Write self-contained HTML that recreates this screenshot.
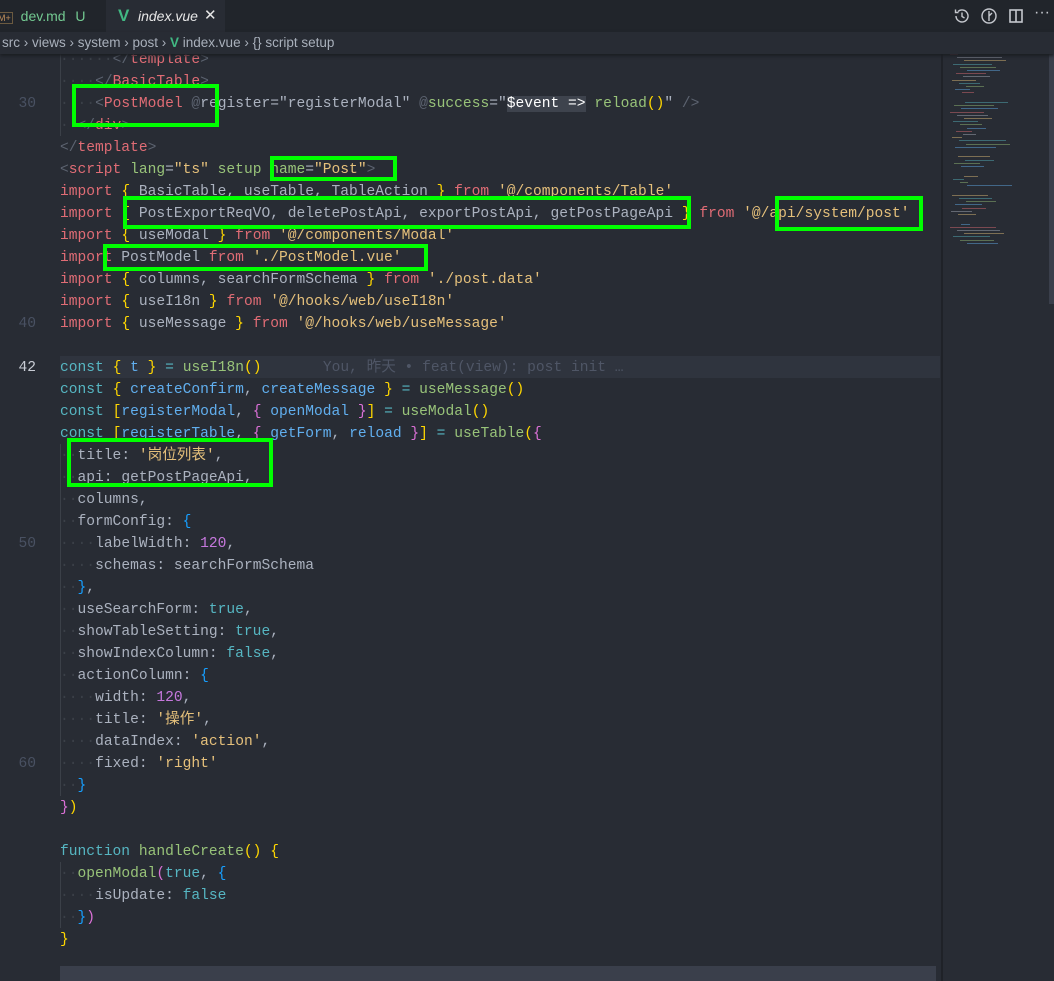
<!DOCTYPE html>
<html><head><meta charset="utf-8"><style>
body{margin:0;width:1054px;height:981px;background:#282c34;overflow:hidden;position:relative;font-family:"Liberation Sans","Noto Sans CJK SC",sans-serif}
.tabs{position:absolute;left:0;top:0;width:1054px;height:32px;background:#21252b}
.tab{position:absolute;top:0;height:32px;line-height:32px;font-size:14px}
.bc{position:absolute;left:0;top:32px;width:1054px;height:22px;background:#282c34;color:#a9b0bb;font-size:13.5px;line-height:22px;box-shadow:0 2px 3px #1b1e23;z-index:5}
.l{position:absolute;left:60px;height:22px;line-height:22px;font-family:"Liberation Mono","Noto Sans CJK SC",monospace;font-size:14.6px;white-space:pre;color:#abb2bf}
.n{position:absolute;left:0;width:36px;text-align:right;height:22px;line-height:22px;font-family:"Liberation Mono",monospace;font-size:14.6px;color:#495162}
.k{color:#e06c75}.c{color:#56b6c2}.s{color:#e5c07b}.f{color:#98c379}.b{color:#61afef}.p{color:#c678dd}.y{color:#ffd700}.m{color:#da70d6}.u{color:#179fff}.d{color:#3b4048}.g{color:#5c6370}
.box{position:absolute;border:4px solid #00ff00;box-sizing:border-box;z-index:6}
.mini{position:absolute;left:950px;top:54px;width:95px;height:927px}
.mini div{position:absolute;height:1px}
</style></head><body>
<div class="tabs">
 <div class="tab" style="left:0;width:105px;color:#73c991"><span style="color:#c18f5b;font-size:9px;border:1px solid #6b5a40;padding:0 1px;margin-left:-4px">M+</span> <span style="margin-left:4px">dev.md</span> <span style="margin-left:6px">U</span> <span style="color:#9da5b4;margin-left:8px">●</span></div>
 <div class="tab" style="left:106px;width:119px;background:#282c34;color:#e6e6e6"><span style="position:absolute;left:12px;color:#41b883;font-weight:bold;font-size:17px">V</span><i style="position:absolute;left:32px">index.vue</i><span style="position:absolute;left:98px;font-size:15px">✕</span></div>
 <svg style="position:absolute;left:953px;top:7px" width="18" height="18" viewBox="0 0 18 18" fill="none" stroke="#c5c8ce" stroke-width="1.4"><path d="M3 9a6 6 0 1 0 2-4.5"/><path d="M2.5 2.5v3h3"/><path d="M9 5.5v4l2.5 1.5"/></svg>
 <svg style="position:absolute;left:980px;top:7px" width="18" height="18" viewBox="0 0 18 18" fill="none" stroke="#c5c8ce" stroke-width="1.4"><circle cx="9" cy="9" r="7"/><path d="M9 4v10M9 9l3-3"/></svg>
 <svg style="position:absolute;left:1007px;top:7px" width="18" height="18" viewBox="0 0 18 18" fill="none" stroke="#c5c8ce" stroke-width="1.6"><rect x="3" y="3" width="12" height="12"/><path d="M9 3v12"/></svg>
 <span style="position:absolute;left:1034px;top:4px;color:#c5c8ce;font-size:16px">···</span>
</div>
<div class="bc"><span style="margin-left:2px">src › views › system › post › <b style="color:#41b883">V</b> index.vue › {} script setup</span></div>
<div style="position:absolute;left:60px;top:356px;width:880px;height:22px;background:#2f343e"></div>
<div style="position:absolute;left:60px;top:966px;width:876px;height:15px;background:#3a3f4b"></div>
<div style="position:absolute;left:941px;top:54px;width:2px;height:927px;background:#1f2228"></div>
<div id="code"></div>
<div class="mini" id="mini"></div>
<div style="position:absolute;left:1049px;top:54px;width:5px;height:250px;background:#3a3f4b"></div>

<div class="box" style="left:72px;top:84px;width:147px;height:43px"></div>
<div class="box" style="left:270px;top:156px;width:127px;height:25px"></div>
<div class="box" style="left:123px;top:196px;width:568px;height:33px"></div>
<div class="box" style="left:775px;top:196px;width:148px;height:35px"></div>
<div class="box" style="left:103px;top:244px;width:325px;height:27px"></div>
<div class="box" style="left:67px;top:438px;width:206px;height:49px"></div>

<script>
const D='<span class="d">·</span>';
const L=[
[28,D+D+D+D+D+D+'<span class="g">&lt;/</span><span class="k">template</span><span class="g">&gt;</span>'],
[29,D+D+D+D+'<span class="g">&lt;/</span><span class="k">BasicTable</span><span class="g">&gt;</span>'],
[30,D+D+D+D+'<span class="g">&lt;</span><span class="k">PostModel</span> <span class="g">@</span>register="registerModal" <span class="g">@</span><span class="f">success</span>="<span style="background:#3e434d;color:#fff">$event =&gt;</span> <span class="f">reload</span><span class="y">()</span>" <span class="g">/&gt;</span>'],
[31,D+D+'<span class="g">&lt;/</span><span class="k">div</span><span class="g">&gt;</span>'],
[32,'<span class="g">&lt;/</span><span class="k">template</span><span class="g">&gt;</span>'],
[33,'<span class="g">&lt;</span><span class="k">script</span> <span class="f">lang</span>=<span class="s">"ts"</span> <span class="f">setup</span> <span class="f">name</span>=<span class="s">"Post"</span><span class="g">&gt;</span>'],
[34,'<span class="k">import</span> <span class="y">{</span> BasicTable, useTable, TableAction <span class="y">}</span> <span class="k">from</span> <span class="s">\'@/components/Table\'</span>'],
[35,'<span class="k">import</span> <span class="y">{</span> PostExportReqVO, deletePostApi, exportPostApi, getPostPageApi <span class="y">}</span> <span class="k">from</span> <span class="s">\'@/api/system/post\'</span>'],
[36,'<span class="k">import</span> <span class="y">{</span> useModal <span class="y">}</span> <span class="k">from</span> <span class="s">\'@/components/Modal\'</span>'],
[37,'<span class="k">import</span> PostModel <span class="k">from</span> <span class="s">\'./PostModel.vue\'</span>'],
[38,'<span class="k">import</span> <span class="y">{</span> columns, searchFormSchema <span class="y">}</span> <span class="k">from</span> <span class="s">\'./post.data\'</span>'],
[39,'<span class="k">import</span> <span class="y">{</span> useI18n <span class="y">}</span> <span class="k">from</span> <span class="s">\'@/hooks/web/useI18n\'</span>'],
[40,'<span class="k">import</span> <span class="y">{</span> useMessage <span class="y">}</span> <span class="k">from</span> <span class="s">\'@/hooks/web/useMessage\'</span>'],
[42,'<span class="c">const</span> <span class="y">{</span> <span class="b">t</span> <span class="y">}</span> <span class="c">=</span> <span class="f">useI18n</span><span class="y">()</span>       <span style="color:#4f5666">You, 昨天 • feat(view): post init …</span>'],
[43,'<span class="c">const</span> <span class="y">{</span> <span class="b">createConfirm</span>, <span class="b">createMessage</span> <span class="y">}</span> <span class="c">=</span> <span class="f">useMessage</span><span class="y">()</span>'],
[44,'<span class="c">const</span> <span class="y">[</span><span class="b">registerModal</span>, <span class="m">{</span> <span class="b">openModal</span> <span class="m">}</span><span class="y">]</span> <span class="c">=</span> <span class="f">useModal</span><span class="y">()</span>'],
[45,'<span class="c">const</span> <span class="y">[</span><span class="b">registerTable</span>, <span class="m">{</span> <span class="b">getForm</span>, <span class="b">reload</span> <span class="m">}</span><span class="y">]</span> <span class="c">=</span> <span class="f">useTable</span><span class="y">(</span><span class="m">{</span>'],
[46,D+D+'title: <span class="s">\'岗位列表\'</span>,'],
[47,D+D+'api: getPostPageApi,'],
[48,D+D+'columns,'],
[49,D+D+'formConfig: <span class="u">{</span>'],
[50,D+D+D+D+'labelWidth: <span class="p">120</span>,'],
[51,D+D+D+D+'schemas: searchFormSchema'],
[52,D+D+'<span class="u">}</span>,'],
[53,D+D+'useSearchForm: <span class="c">true</span>,'],
[54,D+D+'showTableSetting: <span class="c">true</span>,'],
[55,D+D+'showIndexColumn: <span class="c">false</span>,'],
[56,D+D+'actionColumn: <span class="u">{</span>'],
[57,D+D+D+D+'width: <span class="p">120</span>,'],
[58,D+D+D+D+'title: <span class="s">\'操作\'</span>,'],
[59,D+D+D+D+'dataIndex: <span class="s">\'action\'</span>,'],
[60,D+D+D+D+'fixed: <span class="s">\'right\'</span>'],
[61,D+D+'<span class="u">}</span>'],
[62,'<span class="m">}</span><span class="y">)</span>'],
[64,'<span class="c">function</span> <span class="f">handleCreate</span><span class="y">()</span> <span class="y">{</span>'],
[65,D+D+'<span class="f">openModal</span><span class="m">(</span><span class="c">true</span>, <span class="u">{</span>'],
[66,D+D+D+D+'isUpdate: <span class="c">false</span>'],
[67,D+D+'<span class="u">}</span><span class="m">)</span>'],
[68,'<span class="y">}</span>']
];
let h='';
for(const [n,t] of L){const top=93+(n-30)*22;h+=`<div class="l" style="top:${top}px">${t}</div>`;}
for(const n of [30,40,42,50,60]){const top=93+(n-30)*22;h+=`<div class="n" style="top:${top}px;${n==42?'color:#c8ccd4':''}">${n}</div>`;}
h+=`<div style="position:absolute;left:60px;top:444px;width:1px;height:352px;background:#3b4048"></div>`;
h+=`<div style="position:absolute;left:60px;top:862px;width:1px;height:66px;background:#3b4048"></div>`;
h+=`<div style="position:absolute;left:60px;top:48px;width:1px;height:88px;background:#3b4048"></div>`;
document.getElementById('code').innerHTML=h;
let m='',cols=['#e06c75','#abb2bf','#e5c07b','#56b6c2','#98c379','#61afef'];
for(let i=0;i<60;i++){if([13,14,30,31,36,37,42,43,51,52].includes(i))continue;const w=8+((i*37)%40);const ind=(i*7)%18;m+=`<div style="top:${i*3.2}px;left:${ind}px;width:${w}px;background:${cols[i%6]};opacity:.45"></div>`;}
document.getElementById('mini').innerHTML=m;
</script>
</body></html>
